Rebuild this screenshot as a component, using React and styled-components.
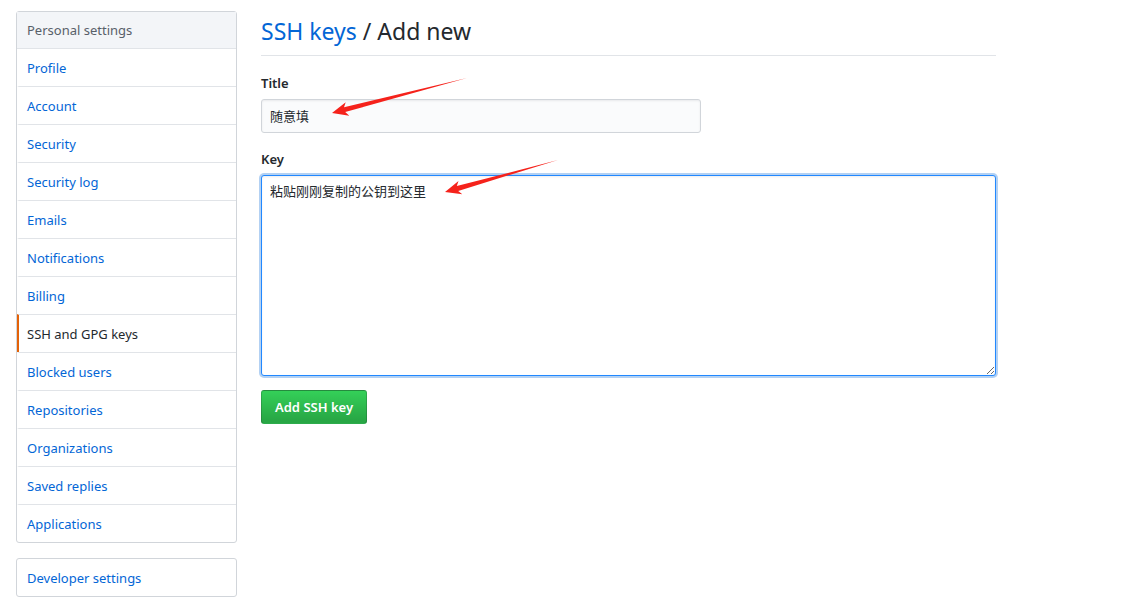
import React from "react";
import styled, { createGlobalStyle } from "styled-components";

const GlobalStyle = createGlobalStyle`
    body {
        margin: 0;
        background: #fff;
        font-family: "Noto Sans", "Noto Sans CJK SC", sans-serif;
        font-size: 13px;
        color: #24292e;
    }
`

const Page = styled.div`
    position: relative;
    display: flex;
    align-items: flex-start;
    gap: 24px;
    padding: 11px 0 0 16px;
    width: 1126px;
    height: 612px;
    box-sizing: border-box;
`

const Sidebar = styled.div`
    width: 221px;
    display: flex;
    flex-direction: column;
    gap: 15px;
`

const Menu = styled.nav`
    border: 1px solid #d1d5da;
    border-radius: 3px;
    background: #fff;
`

const MenuHeading = styled.div`
    height: 36px;
    line-height: 37px;
    padding: 0 10px;
    background: #f3f5f8;
    color: #586069;
    border-bottom: 1px solid #e1e4e8;
`

const MenuItem = styled.a`
    display: block;
    height: 37px;
    line-height: 39px;
    overflow: hidden;
    padding: 0 10px 0 8px;
    color: ${p => p.$selected ? "#24292e" : "#0366d6"};
    border-top: ${p => p.$first ? "none" : "1px solid #e1e4e8"};
    border-left: 2px solid ${p => p.$selected ? "#e36209" : "transparent"};
    text-decoration: none;
`

const Main = styled.div`
    width: 735px;
`

const Heading = styled.h2`
    margin: 0 0 18px;
    padding: 6px 0 10px;
    font-size: 23px;
    font-weight: 400;
    line-height: 28px;
    border-bottom: 1px solid #e1e4e8;
    color: #24292e;
    a {
        color: #0366d6;
        text-decoration: none;
    }
`

const Field = styled.div`
    margin-bottom: 17px;
`

const Label = styled.label`
    display: block;
    font-weight: 600;
    margin-bottom: 7px;
    line-height: 18px;
`

const Input = styled.input`
    display: block;
    width: 440px;
    height: 34px;
    box-sizing: border-box;
    padding: 5px 8px 7px;
    font: inherit;
    color: #24292e;
    background: #fafbfc;
    border: 1px solid #d1d5da;
    border-radius: 3px;
    box-shadow: inset 0 1px 2px rgba(27,31,35,0.075);
    outline: none;
`

const TextArea = styled.textarea`
    display: block;
    width: 735px;
    height: 201px;
    box-sizing: border-box;
    padding: 5px 8px;
    font: inherit;
    color: #24292e;
    background: #fff;
    border: 1px solid #2188ff;
    border-radius: 3px;
    box-shadow: inset 0 1px 2px rgba(27,31,35,0.075), 0 0 0 2px rgba(3,102,214,0.3);
    outline: none;
    resize: vertical;
`

const Button = styled.button`
    height: 34px;
    padding: 0 13px;
    margin-top: -3px;
    font: inherit;
    font-weight: 600;
    color: #fff;
    background-image: linear-gradient(-180deg, #34d058 0%, #28a745 90%);
    border: 1px solid rgba(27,31,35,0.2);
    border-radius: 3px;
    cursor: pointer;
`

const Arrows = styled.svg`
    position: absolute;
    left: 0;
    top: 0;
    pointer-events: none;
`

const items = [
    "Profile", "Account", "Security", "Security log", "Emails", "Notifications",
    "Billing", "SSH and GPG keys", "Blocked users", "Repositories",
    "Organizations", "Saved replies", "Applications"
];

const App = () => {
    return (
        <>
            <GlobalStyle />
            <Page>
                <Sidebar>
                    <Menu>
                        <MenuHeading>Personal settings</MenuHeading>
                        {items.map((item, i) => (
                            <MenuItem key={item} href="#" $first={i === 0} $selected={item === "SSH and GPG keys"}>
                                {item}
                            </MenuItem>
                        ))}
                    </Menu>
                    <Menu>
                        <MenuItem href="#" $first>Developer settings</MenuItem>
                    </Menu>
                </Sidebar>
                <Main>
                    <Heading><a href="#">SSH keys</a> / Add new</Heading>
                    <Field>
                        <Label>Title</Label>
                        <Input type="text" defaultValue="随意填" />
                    </Field>
                    <Field>
                        <Label>Key</Label>
                        <TextArea defaultValue="粘贴刚刚复制的公钥到这里" />
                    </Field>
                    <Button type="submit">Add SSH key</Button>
                </Main>
                <Arrows width="1126" height="612">
                    <polygon fill="#f5221b" points="332,113 345.7,102.2 344,107.3 467,78 345.2,112.1 349.3,115.8" />
                    <polygon fill="#f5221b" points="445,192 458.5,180.9 456.8,186.1 558,160 458.2,190.9 462.3,194.3" />
                </Arrows>
            </Page>
        </>
    );
}

export default App;
